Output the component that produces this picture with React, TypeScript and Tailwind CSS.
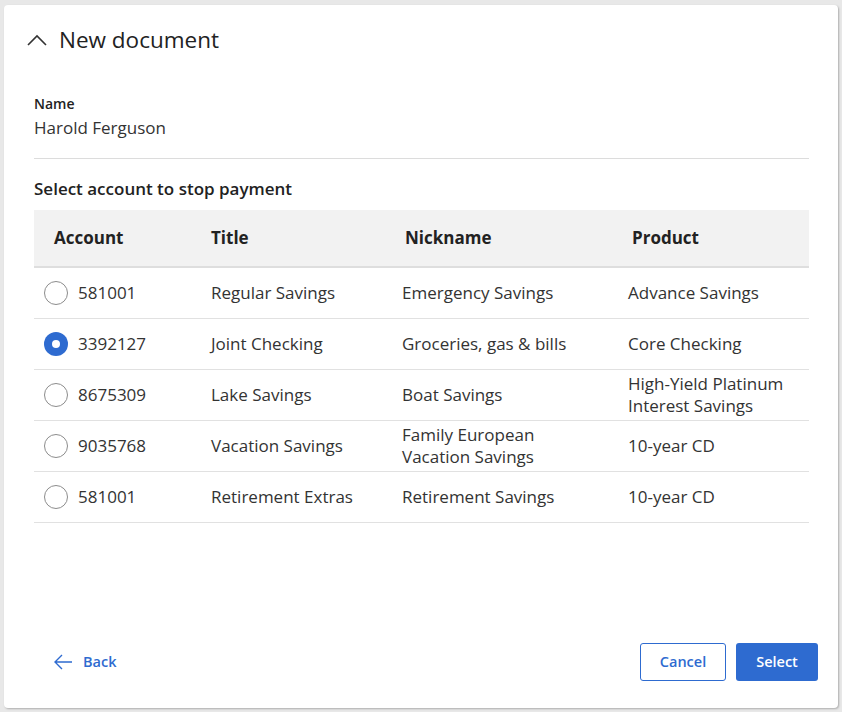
import React, { useState } from 'react';

const rows = [
  { account: '581001', title: 'Regular Savings', nickname: 'Emergency Savings', product: 'Advance Savings' },
  { account: '3392127', title: 'Joint Checking', nickname: 'Groceries, gas & bills', product: 'Core Checking' },
  { account: '8675309', title: 'Lake Savings', nickname: 'Boat Savings', product: 'High-Yield Platinum Interest Savings' },
  { account: '9035768', title: 'Vacation Savings', nickname: 'Family European Vacation Savings', product: '10-year CD' },
  { account: '581001', title: 'Retirement Extras', nickname: 'Retirement Savings', product: '10-year CD' },
];

const Radio = ({ checked, onClick }: { checked: boolean; onClick: () => void }) => (
  <button
    onClick={onClick}
    className={`w-6 h-6 rounded-full flex items-center justify-center shrink-0 ${
      checked ? 'bg-[#2e6bd0]' : 'border border-[#8c8c8c] bg-white'
    }`}
  >
    {checked && <span className="w-2 h-2 rounded-full bg-white" />}
  </button>
);

export default function App() {
  const [selected, setSelected] = useState(1);

  return (
    <div className="min-h-screen bg-[#e8e8e8] pt-[5px] pl-[4px] pr-[4px] pb-[4px] font-['Open_Sans',sans-serif] text-[#333]">
      <div className="bg-white h-[703px] rounded-sm shadow-[1px_1px_2px_rgba(0,0,0,0.25)] flex flex-col">
        {/* Header */}
        <div className="flex gap-3 pl-[23px] pt-[20px] h-[70px] items-start">
          <svg width="20" height="12" viewBox="0 0 20 12" className="mt-[9px]" fill="none">
            <path d="M1 11 L10 2 L19 11" stroke="#333" strokeWidth="1.6" />
          </svg>
          <h1 className="text-[22.5px] leading-[30px] font-medium text-[#222]">New document</h1>
        </div>

        <div className="pl-[30px] pr-[29px] flex-1 flex flex-col">
          <div className="pt-[19px]">
            <div className="text-[14px] leading-[19px] font-semibold text-[#222]">Name</div>
            <div className="text-[17px] leading-[23px] mt-[3px]">Harold Ferguson</div>
          </div>
          <div className="border-b border-[#dcdcdc] mt-[19px]" />

          <div className="text-[17px] leading-[23px] font-semibold text-[#222] mt-[18px]">Select account to stop payment</div>

          {/* Table */}
          <div className="mt-[10px]">
            <div className="grid grid-cols-[161px_191px_222px_1fr] bg-[#f2f2f2] h-[58px] items-center border-b-2 border-[#dedede] font-bold text-[17px] text-[#222]">
              <div className="pl-5">Account</div>
              <div className="pl-4">Title</div>
              <div className="pl-[19px]">Nickname</div>
              <div className="pl-6">Product</div>
            </div>
            {rows.map((r, i) => (
              <div
                key={i}
                className="grid grid-cols-[161px_191px_222px_1fr] h-[51px] items-center border-b border-[#e1e1e1] text-[17px] leading-[22px]"
              >
                <div className="pl-2.5 flex items-center gap-2.5">
                  <Radio checked={selected === i} onClick={() => setSelected(i)} />
                  <span>{r.account}</span>
                </div>
                <div className="pl-4">{r.title}</div>
                <div className="pl-4 pr-4">{r.nickname}</div>
                <div className="pl-5 pr-2">{r.product}</div>
              </div>
            ))}
          </div>

          {/* Footer */}
          <div className="mt-auto mb-[27px] flex items-center justify-between">
            <button className="flex items-center gap-[10px] pl-5 text-[#2e6bd0] text-[14.5px] font-semibold">
              <svg width="19" height="16" viewBox="0 0 19 16" fill="none">
                <path d="M8 1 L1 8 L8 15 M1 8 H18" stroke="#2e6bd0" strokeWidth="1.4" />
              </svg>
              Back
            </button>
            <div className="flex gap-[10px] mr-[-9px]">
              <button className="w-[86px] h-[38px] border border-[#2e6bd0] rounded-[3px] text-[#2e6bd0] text-[14.5px] font-semibold">
                Cancel
              </button>
              <button className="w-[82px] h-[38px] bg-[#2e6bd0] rounded-[3px] text-white text-[14.5px] font-semibold">
                Select
              </button>
            </div>
          </div>
        </div>
      </div>
    </div>
  );
}
